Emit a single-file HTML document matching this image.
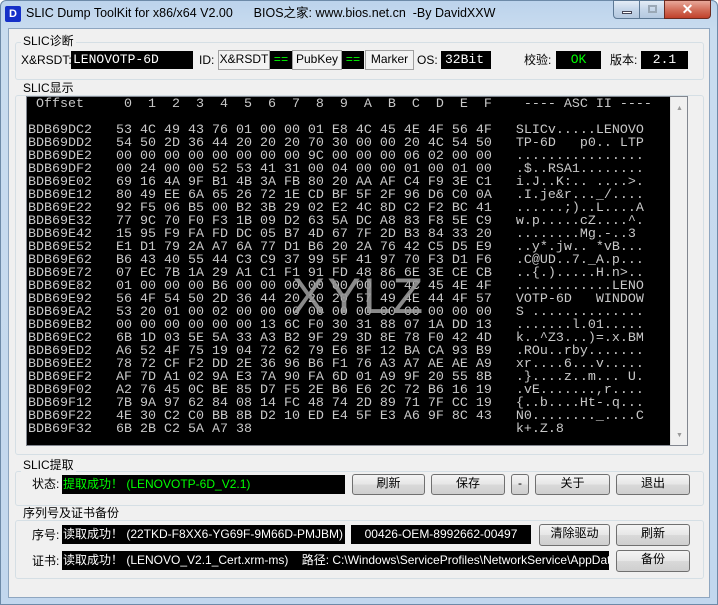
<!DOCTYPE html>
<html><head><meta charset="utf-8"><style>
*{margin:0;padding:0;box-sizing:border-box}
body{width:718px;height:605px;overflow:hidden;background:#fff;font-family:"Liberation Sans","Noto Sans CJK SC",sans-serif;font-size:12px;color:#000;position:relative}
.a{position:absolute}
.win{left:0;top:0;width:718px;height:605px;background:linear-gradient(180deg,#bcd3ec 0,#c9dcef 30px,#c2d7ee 100%);border:1px solid #6d8aa8;border-radius:6px 6px 0 0}
.client{left:8px;top:28px;width:702px;height:570px;background:#f0f0f0;border:1px solid #8ea6c0}
.grp{position:absolute;border:1px solid #d5dfe5;border-radius:3px}
.gt{position:absolute;background:#f0f0f0;padding:0 2px;line-height:14px}
.blk{position:absolute;background:#000;color:#fff;line-height:18px;white-space:nowrap;overflow:hidden}
.mono{font-family:"Liberation Mono",monospace}
.bt{position:absolute;border:1px solid #707070;border-radius:3px;background:linear-gradient(#f4f4f4,#e6e6e6 50%,#d9d9d9 51%,#cfcfcf);text-align:center;line-height:17px}
.fb{position:absolute;border:1px solid #a0a0a0;background:#f2f2f2;text-align:center;line-height:17px}
.lb{position:absolute;line-height:18px}
pre{font-family:"Liberation Mono",monospace;font-size:13.33px;line-height:13px;color:#c8c8c8}
</style></head><body>
<div class="a win"></div>
<div class="a" style="left:5px;top:6px;width:16px;height:16px;background:#1530c8;border-radius:2px;color:#fff;font-weight:bold;font-size:11px;text-align:center;line-height:16px">D</div>
<div class="a" style="left:26px;top:5px;font-size:12.5px;line-height:16px;white-space:pre">SLIC Dump ToolKit for x86/x64 V2.00      BIOS之家: www.bios.net.cn  -By DavidXXW</div>
<div class="a" style="left:613px;top:0;width:27px;height:19px;border:1px solid #5c7894;border-radius:0 0 0 4px;background:linear-gradient(#e3ecf6,#c5d6e9 50%,#b4c8df)"><div class="a" style="left:8px;top:10px;width:10px;height:3px;background:#fff;border:1px solid #445"></div></div>
<div class="a" style="left:639px;top:0;width:26px;height:19px;border:1px solid #5c7894;background:linear-gradient(#e3ecf6,#c5d6e9 50%,#b4c8df)"><div class="a" style="left:8px;top:4px;width:9px;height:8px;border:2px solid #9aa8b6"></div></div>
<div class="a" style="left:664px;top:0;width:47px;height:19px;border:1px solid #6b2a20;border-radius:0 0 4px 0;background:linear-gradient(#e8a89a,#d3705c 50%,#c0412b);color:#fff;font-weight:bold;text-align:center;line-height:17px;font-size:14px">✕</div>
<div class="a client"></div>

<!-- SLIC诊断 -->
<div class="grp" style="left:15px;top:42px;width:689px;height:38px"></div>
<div class="gt" style="left:21px;top:34px">SLIC诊断</div>
<div class="lb" style="left:21px;top:51px">X&amp;RSDT:</div>
<div class="blk mono" style="left:71px;top:51px;width:122px;height:18px;padding-left:2px;font-size:13px">LENOVOTP-6D</div>
<div class="lb" style="left:199px;top:51px">ID:</div>
<div class="fb" style="left:218px;top:50px;width:52px;height:20px">X&amp;RSDT</div>
<div class="blk mono" style="left:270px;top:51px;width:22px;height:18px;color:#0f0;text-align:center">==</div>
<div class="fb" style="left:292px;top:50px;width:50px;height:20px">PubKey</div>
<div class="blk mono" style="left:342px;top:51px;width:22px;height:18px;color:#0f0;text-align:center">==</div>
<div class="fb" style="left:365px;top:50px;width:49px;height:20px">Marker</div>
<div class="lb" style="left:417px;top:51px">OS:</div>
<div class="blk mono" style="left:441px;top:51px;width:50px;height:18px;padding-left:4px;font-size:13px">32Bit</div>
<div class="lb" style="left:524px;top:51px">校验:</div>
<div class="blk mono" style="left:556px;top:51px;width:45px;height:18px;color:#0f0;text-align:center;font-size:13px">OK</div>
<div class="lb" style="left:610px;top:51px">版本:</div>
<div class="blk mono" style="left:641px;top:51px;width:47px;height:18px;text-align:center;font-size:13px">2.1</div>

<!-- SLIC显示 -->
<div class="grp" style="left:15px;top:95px;width:689px;height:360px"></div>
<div class="gt" style="left:21px;top:81px">SLIC显示</div>
<div class="a" style="left:26px;top:96px;width:662px;height:350px;border:1px solid #828790;background:#000"></div>
<div class="a" style="left:670px;top:97px;width:17px;height:348px;background:#f0f0f0;border-left:1px solid #e0e0e0"><div class="a" style="left:5px;top:8px;font-size:7px;color:#999">▲</div><div class="a" style="left:5px;bottom:6px;font-size:7px;color:#999">▼</div></div>
<pre class="a" style="left:28px;top:98px">
 Offset     0  1  2  3  4  5  6  7  8  9  A  B  C  D  E  F    ---- ASC II ----

BDB69DC2   53 4C 49 43 76 01 00 00 01 E8 4C 45 4E 4F 56 4F   SLICv.....LENOVO
BDB69DD2   54 50 2D 36 44 20 20 20 70 30 00 00 20 4C 54 50   TP-6D   p0.. LTP
BDB69DE2   00 00 00 00 00 00 00 00 9C 00 00 00 06 02 00 00   ................
BDB69DF2   00 24 00 00 52 53 41 31 00 04 00 00 01 00 01 00   .$..RSA1........
BDB69E02   69 16 4A 9F B1 4B 3A FB 80 20 AA AF C4 F9 3E C1   i.J..K:.. ....>.
BDB69E12   80 49 EE 6A 65 26 72 1E CD BF 5F 2F 96 D6 C0 0A   .I.je&amp;r..._/....
BDB69E22   92 F5 06 B5 00 B2 3B 29 02 E2 4C 8D C2 F2 BC 41   ......;)..L....A
BDB69E32   77 9C 70 F0 F3 1B 09 D2 63 5A DC A8 83 F8 5E C9   w.p.....cZ....^.
BDB69E42   15 95 F9 FA FD DC 05 B7 4D 67 7F 2D B3 84 33 20   ........Mg.-..3 
BDB69E52   E1 D1 79 2A A7 6A 77 D1 B6 20 2A 76 42 C5 D5 E9   ..y*.jw.. *vB...
BDB69E62   B6 43 40 55 44 C3 C9 37 99 5F 41 97 70 F3 D1 F6   .C@UD..7._A.p...
BDB69E72   07 EC 7B 1A 29 A1 C1 F1 91 FD 48 86 6E 3E CE CB   ..{.).....H.n&gt;..
BDB69E82   01 00 00 00 B6 00 00 00 00 00 00 00 4C 45 4E 4F   ............LENO
BDB69E92   56 4F 54 50 2D 36 44 20 20 20 57 49 4E 44 4F 57   VOTP-6D   WINDOW
BDB69EA2   53 20 01 00 02 00 00 00 00 00 00 00 00 00 00 00   S ..............
BDB69EB2   00 00 00 00 00 00 13 6C F0 30 31 88 07 1A DD 13   .......l.01.....
BDB69EC2   6B 1D 03 5E 5A 33 A3 B2 9F 29 3D 8E 78 F0 42 4D   k..^Z3...)=.x.BM
BDB69ED2   A6 52 4F 75 19 04 72 62 79 E6 8F 12 BA CA 93 B9   .ROu..rby.......
BDB69EE2   78 72 CF F2 DD 2E 36 96 B6 F1 76 A3 A7 AE AE A9   xr....6...v.....
BDB69EF2   AF 7D A1 02 9A E3 7A 90 FA 6D 01 A9 9F 20 55 8B   .}....z..m... U.
BDB69F02   A2 76 45 0C BE 85 D7 F5 2E B6 E6 2C 72 B6 16 19   .vE.......,r....
BDB69F12   7B 9A 97 62 84 08 14 FC 48 74 2D 89 71 7F CC 19   {..b....Ht-.q...
BDB69F22   4E 30 C2 C0 BB 8B D2 10 ED E4 5F E3 A6 9F 8C 43   N0........_....C
BDB69F32   6B 2B C2 5A A7 38                                 k+.Z.8
</pre>
<div class="a" style="left:292px;top:268px;font-size:50px;line-height:56px;color:#9a9a9a;letter-spacing:2px;opacity:.9">XYLZ</div>

<!-- SLIC提取 -->
<div class="grp" style="left:15px;top:471px;width:689px;height:35px"></div>
<div class="gt" style="left:21px;top:458px">SLIC提取</div>
<div class="lb" style="left:32px;top:475px">状态:</div>
<div class="blk" style="left:62px;top:475px;width:283px;height:19px;color:#0f0;padding-left:1px">提取成功！ (LENOVOTP-6D_V2.1)</div>
<div class="bt" style="left:352px;top:474px;width:73px;height:21px">刷新</div>
<div class="bt" style="left:431px;top:474px;width:74px;height:21px">保存</div>
<div class="bt" style="left:511px;top:474px;width:18px;height:21px">-</div>
<div class="bt" style="left:535px;top:474px;width:75px;height:21px">关于</div>
<div class="bt" style="left:616px;top:474px;width:74px;height:21px">退出</div>

<!-- 序列号 -->
<div class="grp" style="left:15px;top:520px;width:689px;height:59px"></div>
<div class="gt" style="left:21px;top:506px">序列号及证书备份</div>
<div class="lb" style="left:32px;top:526px">序号:</div>
<div class="blk" style="left:62px;top:525px;width:283px;height:19px;padding-left:1px">读取成功！ (22TKD-F8XX6-YG69F-9M66D-PMJBM)</div>
<div class="blk" style="left:351px;top:525px;width:180px;height:19px;text-align:center">00426-OEM-8992662-00497</div>
<div class="bt" style="left:539px;top:524px;width:71px;height:22px">清除驱动</div>
<div class="bt" style="left:616px;top:524px;width:74px;height:22px">刷新</div>
<div class="lb" style="left:32px;top:552px">证书:</div>
<div class="blk" style="left:62px;top:551px;width:547px;height:19px;padding-left:1px;white-space:pre">读取成功！ (LENOVO_V2.1_Cert.xrm-ms)    路径: C:\Windows\ServiceProfiles\NetworkService\AppData\Roaming</div>
<div class="bt" style="left:616px;top:550px;width:74px;height:22px">备份</div>
</body></html>
